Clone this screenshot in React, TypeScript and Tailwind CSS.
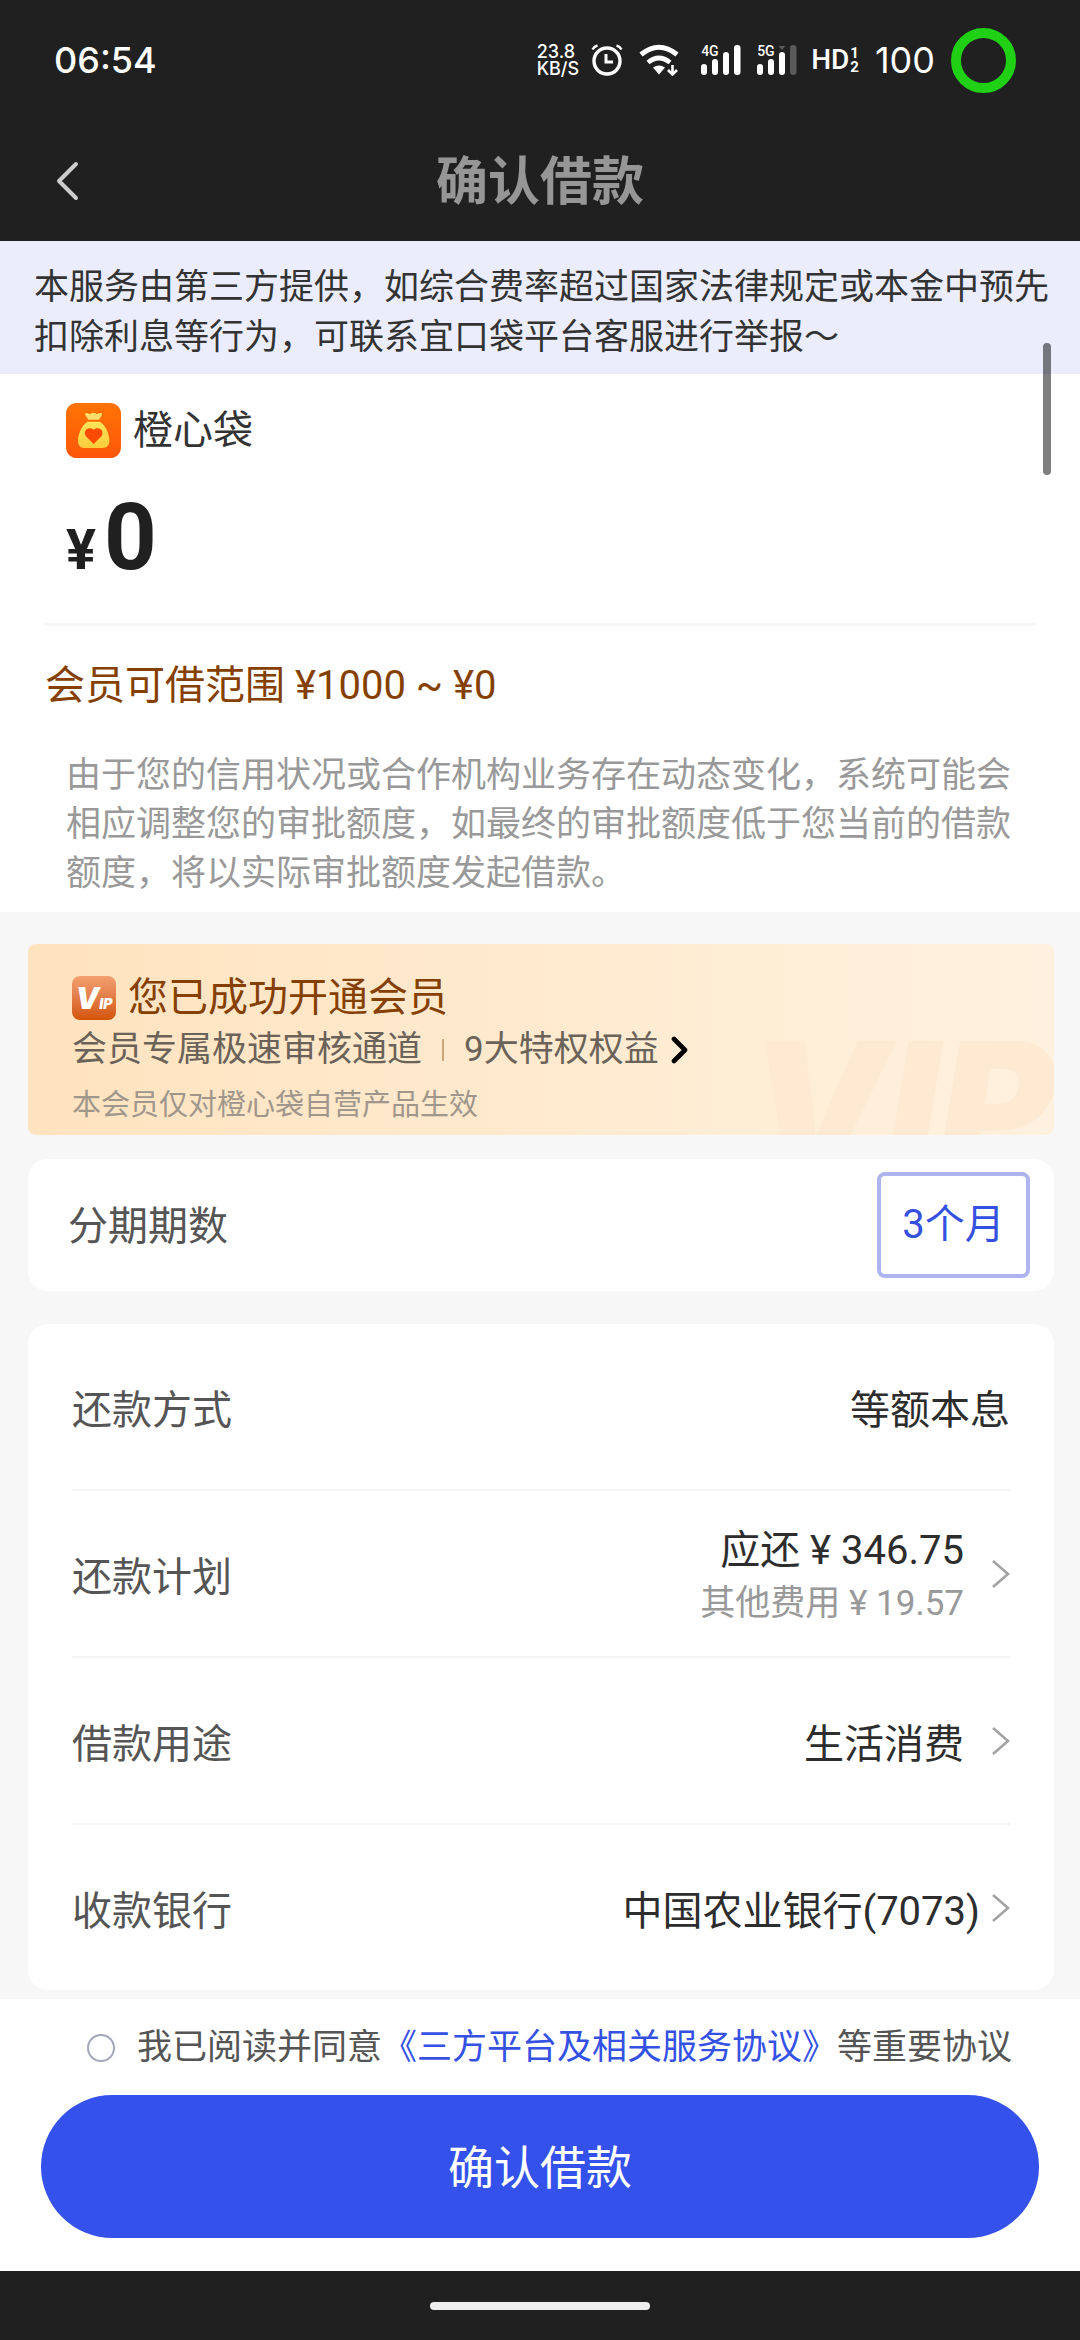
import type { ReactNode } from 'react'

interface DetailRow {
  label: string
  value: string
  note?: string
  arrow?: boolean
  tight?: boolean
}

const ROWS: DetailRow[] = [
  { label: '还款方式', value: '等额本息' },
  { label: '还款计划', value: '应还 ¥ 346.75', note: '其他费用 ¥ 19.57', arrow: true },
  { label: '借款用途', value: '生活消费', arrow: true },
  { label: '收款银行', value: '中国农业银行(7073)', arrow: true, tight: true },
]

function AlarmIcon() {
  return (
    <svg className="h-8 w-8" viewBox="0 0 32 32" fill="none" stroke="#fff" aria-hidden>
      <circle cx="16" cy="17" r="13" strokeWidth="3.4" />
      <path d="M15 10v8h7" strokeWidth="3" />
      <path d="M1.5 5.5Q3 2.5 6.5 1.5M30.5 5.5Q29 2.5 25.5 1.5" strokeWidth="2.4" />
    </svg>
  )
}

function WifiIcon() {
  return (
    <svg className="h-8 w-10" viewBox="0 0 40 32" fill="none" stroke="#fff" aria-hidden>
      <path d="M2 10.5Q20-4 38 10.5" strokeWidth="5" />
      <path d="M9 18.5Q20 9.500 31 18.5" strokeWidth="4.6" />
      <path d="M14 23.5Q20 19.500 26 23.5L20 30.5Z" fill="#fff" stroke="none" />
      <path d="M33.5 21v9M29 26l4.5 4.5 4.500-4.500" strokeWidth="2.6" />
    </svg>
  )
}

function Signal({ label, weak }: { label: string; weak?: boolean }) {
  return (
    <div className="relative h-8 w-10">
      <span className="absolute left-0 top-0 text-[14px] leading-[14px] font-medium">{label}</span>
      <svg className="h-8 w-10" viewBox="0 0 40 32" fill="#fff" aria-hidden>
        <rect x="0" y="20" width="6" height="11" rx="3" />
        <rect x="11" y="15" width="6" height="16" rx="3" />
        <rect x="22" y="8" width="6" height="23" rx="3" />
        {weak && <path d="M21.5 2h7L25 6Z" fill="#5a5a5a" />}
        <rect x="33" y="1" width="6.5" height="30" rx="3" fill={weak ? '#5a5a5a' : '#fff'} />
      </svg>
    </div>
  )
}

function StatusBar() {
  return (
    <div className="flex h-[120px] items-center justify-between pl-[54px] pr-16 text-white">
      <span className="font-['Inter'] text-[36px] leading-[40px] font-medium">06:54</span>
      <div className="flex items-center">
        <div className="font-['Inter'] text-[18px] leading-[17px] font-medium">
          <div>23.8</div>
          <div>KB/S</div>
        </div>
        <div className="ml-3 flex items-center gap-4">
          <AlarmIcon />
          <WifiIcon />
        </div>
        <div className="ml-[22px] flex items-center gap-4">
          <Signal label="4G" />
          <Signal label="5G" weak />
        </div>
        <div className="ml-[14px] flex items-center">
          <span className="text-[28px] leading-[40px] font-medium">HD</span>
          <span className="ml-px text-[15px] leading-[14px] font-bold">
            <span className="block">1</span>
            <span className="block">2</span>
          </span>
        </div>
        <span className="ml-4 font-['Inter'] text-[36px] leading-[40px]">100</span>
        <span className="ml-4 size-[65px] rounded-full border-[10px] border-[#1fd014]" />
      </div>
    </div>
  )
}

function BagLogo() {
  return (
    <svg className="size-[55px]" viewBox="0 0 165 165" aria-hidden>
      <defs>
        <linearGradient id="bagBg" x1="0" y1="0" x2="0" y2="1">
          <stop offset="0" stopColor="#ff7405" />
          <stop offset="1" stopColor="#ff560a" />
        </linearGradient>
        <linearGradient id="bagGold" x1="0" y1="0" x2="0" y2="1">
          <stop offset="0" stopColor="#ffe45c" />
          <stop offset="1" stopColor="#ffcd3a" />
        </linearGradient>
      </defs>
      <rect width="165" height="165" rx="32" fill="url(#bagBg)" />
      <path
        d="M58 31Q64 28 71 34Q82 24 94 34Q101 28 107 31Q110 34 106 39L99 50H67L60 39Q55 34 58 31Z"
        fill="#ffe06a"
      />
      <path
        d="M64 56H102Q124 72 130 106Q133 134 112 135H53Q33 134 36 106Q42 72 64 56Z"
        fill="url(#bagGold)"
      />
      <path d="M83 123L61 101C48 85 66 67 83 80C100 67 118 85 105 101Z" fill="#ff4a00" />
    </svg>
  )
}

function Arrow() {
  return (
    <svg className="h-7 w-[18px] shrink-0" viewBox="0 0 18 28" fill="none" aria-hidden>
      <path d="M1 1L16 14L1 27" stroke="#a3a3a3" strokeWidth="2.6" />
    </svg>
  )
}

function VipBanner() {
  return (
    <section className="relative h-[191px] overflow-hidden rounded-lg bg-linear-to-r from-[#ffe3bf] to-[#fff1df] px-11 pt-[30px]">
      <span
        className="absolute right-0 top-[73px] font-['Inter'] text-[176px] leading-[176px] font-black italic text-[#fee9d3]"
        aria-hidden
      >
        VIP
      </span>
      <div className="relative">
        <div className="flex items-center gap-3">
          <span className="flex size-11 items-baseline justify-center overflow-hidden rounded-lg bg-linear-to-b from-[#f2a070] to-[#d35400] font-['Inter'] font-black italic leading-[44px] text-white">
            <span className="text-[30px]">V</span>
            <span className="text-[14px]">IP</span>
          </span>
          <h2 className="text-[40px] leading-[48px] text-[#854000]">您已成功开通会员</h2>
        </div>
        <a href="#benefits" className="mt-[3px] flex items-center text-[35px] leading-[50px] text-[#6b6259]">
          会员专属极速审核通道
          <span className="mx-5 h-[22px] w-[2px] bg-[#cfa57c]" />
          9大特权权益
          <svg className="ml-3 h-7 w-[18px]" viewBox="0 0 18 28" fill="none" aria-hidden>
            <path d="M3 3L14 14L3 25" stroke="#000" strokeWidth="4.6" strokeLinecap="round" strokeLinejoin="round" />
          </svg>
        </a>
        <p className="mt-2 text-[29px] leading-[44px] text-[#a0968c]">本会员仅对橙心袋自营产品生效</p>
      </div>
    </section>
  )
}

function RowShell({ arrow, children }: { arrow?: boolean; children: ReactNode }) {
  const cls = 'flex h-[165px] w-full items-center justify-between text-left text-[40px] leading-[48px]'
  return arrow ? (
    <button type="button" className={cls}>
      {children}
    </button>
  ) : (
    <div className={cls}>{children}</div>
  )
}

function DetailList() {
  return (
    <ul className="mt-[33px] divide-y-2 divide-[#f4f4f4] rounded-[20px] bg-white px-11">
      {ROWS.map((row) => (
        <li key={row.label}>
          <RowShell arrow={row.arrow}>
            <span className="pt-2 text-[#555]">{row.label}</span>
            <span className={`flex items-center text-[#2d2d2d] ${row.tight ? 'gap-3' : 'gap-7'}`}>
              <span className="pt-2 text-right">
                {row.value}
                {row.note && (
                  <span className="mt-1 block text-[35px] leading-[50px] text-[#999]">{row.note}</span>
                )}
              </span>
              {row.arrow && <Arrow />}
            </span>
          </RowShell>
        </li>
      ))}
    </ul>
  )
}

export default function App() {
  return (
    <div className="flex min-h-screen flex-col bg-[#f7f7f7] font-['Roboto','Noto_Sans_CJK_SC',sans-serif]">
      <header className="bg-[#202020]">
        <StatusBar />
        <div className="relative flex h-[121px] items-center justify-center">
          <button type="button" aria-label="返回" className="absolute left-14">
            <svg className="h-10 w-6" viewBox="0 0 24 40" fill="none" aria-hidden>
              <path d="M20 3L3 20L20 37" stroke="#ccc" strokeWidth="4" strokeLinecap="round" strokeLinejoin="round" />
            </svg>
          </button>
          <h1 className="pt-1 text-[52px] leading-[60px] font-bold text-[#969696]">确认借款</h1>
        </div>
      </header>

      <main className="relative">
        <div className="absolute right-[29px] top-[102px] h-[132px] w-2 rounded-full bg-black/50" />

        <p className="bg-[#ebedfd] pb-[11px] pl-[34px] pr-[30px] pt-[22px] text-[35px] leading-[50px] text-[#333]">
          本服务由第三方提供，如综合费率超过国家法律规定或本金中预先扣除利息等行为，可联系宜口袋平台客服进行举报～
        </p>

        <section className="bg-white pt-[29px] pb-[14px]">
          <div className="flex items-center gap-3 px-[66px]">
            <BagLogo />
            <span className="text-[40px] leading-[48px] text-[#333]">橙心袋</span>
          </div>
          <div className="flex h-[165px] items-baseline gap-2 px-[66px] pt-[34px] font-bold leading-[92px] text-[#202020]">
            <span className="text-[56px]">¥</span>
            <span className="text-[92px]">0</span>
          </div>
          <div className="mx-[44px] h-[3px] bg-[#f6f6f6]" />
          <p className="mt-9 px-[45px] text-[40px] leading-[48px] text-[#854000]">会员可借范围 ¥1000 ~ ¥0</p>
          <p className="mt-[41px] px-[66px] text-[35px] leading-[49px] text-[#999]">
            由于您的信用状况或合作机构业务存在动态变化，系统可能会相应调整您的审批额度，如最终的审批额度低于您当前的借款额度，将以实际审批额度发起借款。
          </p>
        </section>

        <div className="pl-7 pr-[26px] pt-8 pb-2">
          <VipBanner />
          <section className="mt-6 flex h-[132px] items-center justify-between rounded-[20px] bg-white pl-10 pr-6 text-[40px] leading-[48px]">
            <span className="pt-1 text-[#555]">分期期数</span>
            <button
              type="button"
              className="h-[106px] w-[153px] rounded-lg border-4 border-[#adb4ef] text-[#3450e0]"
            >
              3个月
            </button>
          </section>
          <DetailList />
        </div>
      </main>

      <footer className="mt-auto">
        <div className="bg-white px-[41px] pt-6 pb-[33px]">
          <div className="flex items-center gap-[22px] pl-[46px] text-[35px] leading-[50px] text-[#555]">
            <input
              id="agree"
              type="radio"
              className="size-7 shrink-0 appearance-none rounded-full border-2 border-[#a5a7bb] checked:bg-[#3451ec]"
            />
            <label htmlFor="agree" className="whitespace-nowrap">
              我已阅读并同意
              <a href="#agreement" className="text-[#3451e4]">
                《三方平台及相关服务协议》
              </a>
              等重要协议
            </label>
          </div>
          <button
            type="button"
            className="mt-[22px] h-[143px] w-full rounded-full bg-[#3451ec] pt-1 text-[46px] text-white"
          >
            确认借款
          </button>
        </div>
        <div className="flex h-[69px] items-center justify-center bg-[#202020]">
          <span className="h-2 w-[220px] rounded-full bg-[#eee]" />
        </div>
      </footer>
    </div>
  )
}
